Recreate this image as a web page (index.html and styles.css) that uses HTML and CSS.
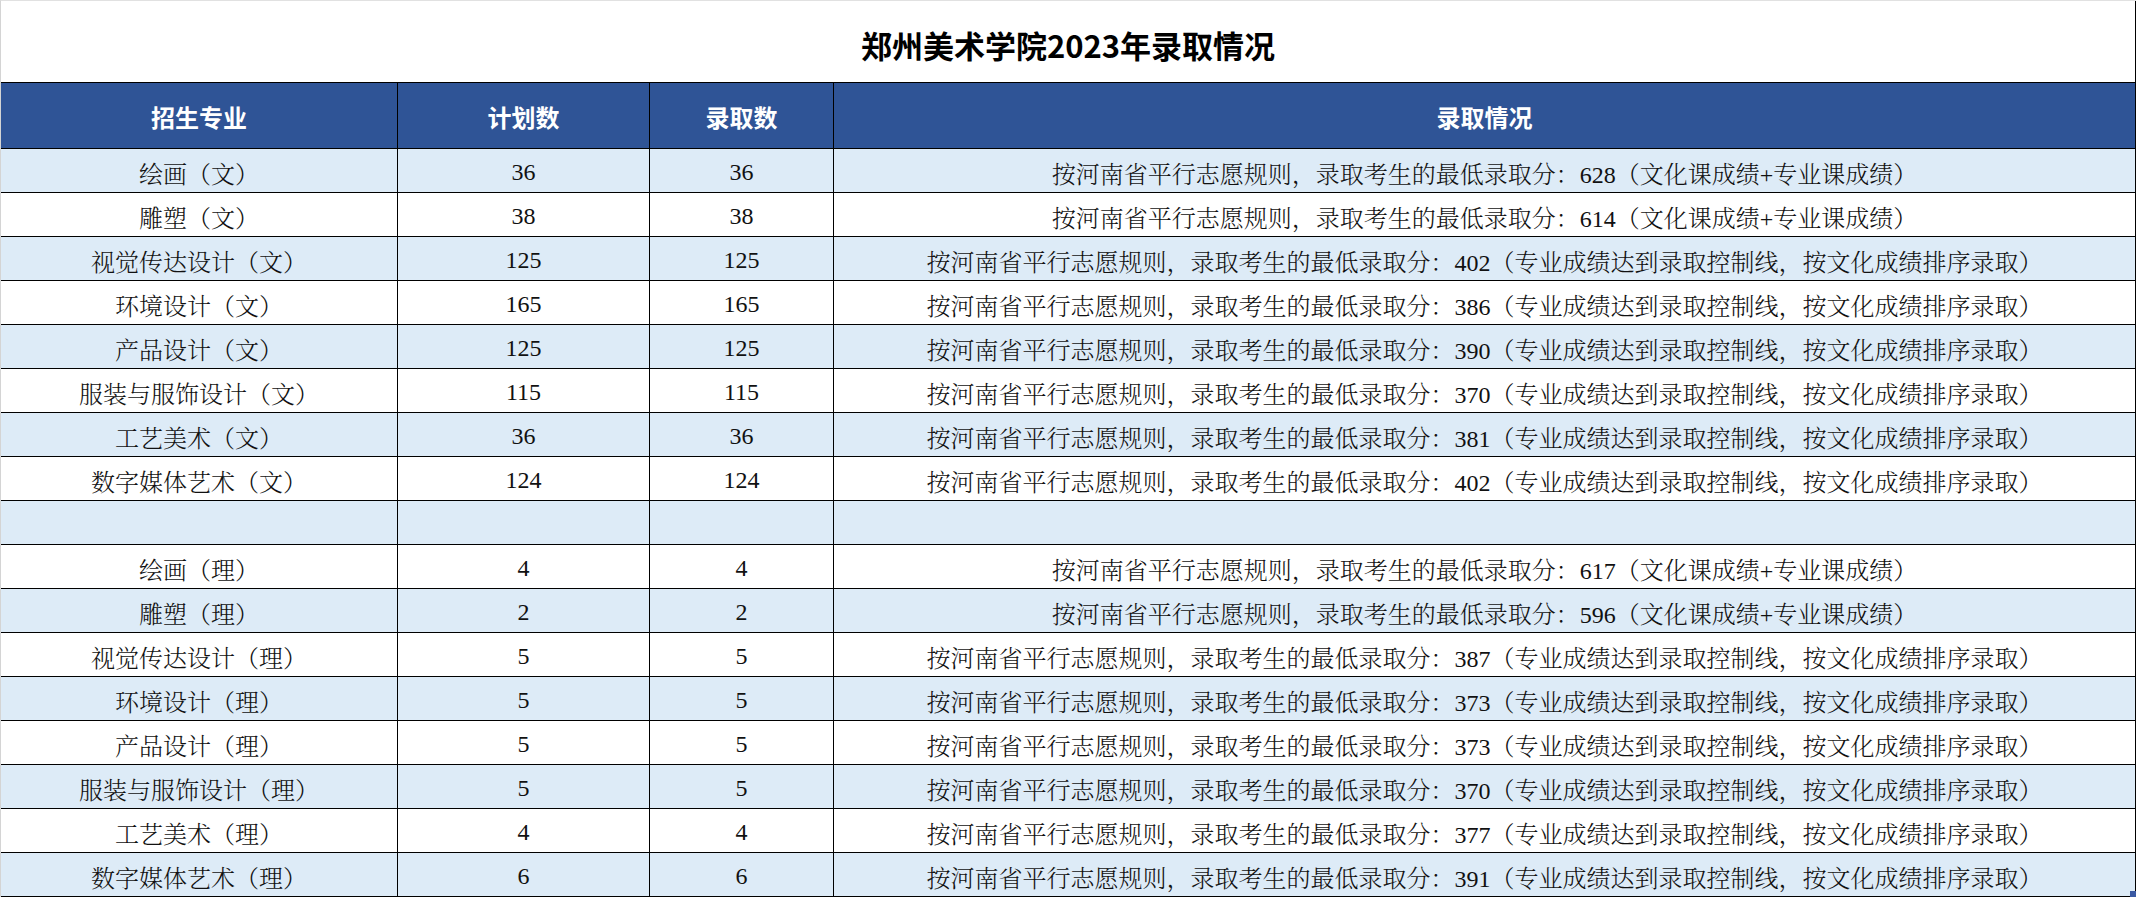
FILE: index.html
```html
<!DOCTYPE html>
<html lang="zh-CN">
<head>
<meta charset="utf-8">
<title>郑州美术学院2023年录取情况</title>
<link rel="stylesheet" href="styles.css">
</head>
<body>
<div class="sheet">
  <div class="title">郑州美术学院2023年录取情况</div>
  <div class="hd">招生专业</div><div class="hd">计划数</div><div class="hd">录取数</div><div class="hd">录取情况</div>

  <div class="c alt">绘画（文）</div><div class="c alt">36</div><div class="c alt">36</div><div class="c alt">按河南省平行志愿规则，录取考生的最低录取分：628（文化课成绩+专业课成绩）</div>
  <div class="c">雕塑（文）</div><div class="c">38</div><div class="c">38</div><div class="c">按河南省平行志愿规则，录取考生的最低录取分：614（文化课成绩+专业课成绩）</div>
  <div class="c alt">视觉传达设计（文）</div><div class="c alt">125</div><div class="c alt">125</div><div class="c alt">按河南省平行志愿规则，录取考生的最低录取分：402（专业成绩达到录取控制线，按文化成绩排序录取）</div>
  <div class="c">环境设计（文）</div><div class="c">165</div><div class="c">165</div><div class="c">按河南省平行志愿规则，录取考生的最低录取分：386（专业成绩达到录取控制线，按文化成绩排序录取）</div>
  <div class="c alt">产品设计（文）</div><div class="c alt">125</div><div class="c alt">125</div><div class="c alt">按河南省平行志愿规则，录取考生的最低录取分：390（专业成绩达到录取控制线，按文化成绩排序录取）</div>
  <div class="c">服装与服饰设计（文）</div><div class="c">115</div><div class="c">115</div><div class="c">按河南省平行志愿规则，录取考生的最低录取分：370（专业成绩达到录取控制线，按文化成绩排序录取）</div>
  <div class="c alt">工艺美术（文）</div><div class="c alt">36</div><div class="c alt">36</div><div class="c alt">按河南省平行志愿规则，录取考生的最低录取分：381（专业成绩达到录取控制线，按文化成绩排序录取）</div>
  <div class="c">数字媒体艺术（文）</div><div class="c">124</div><div class="c">124</div><div class="c">按河南省平行志愿规则，录取考生的最低录取分：402（专业成绩达到录取控制线，按文化成绩排序录取）</div>

  <div class="c alt"></div><div class="c alt"></div><div class="c alt"></div><div class="c alt"></div>

  <div class="c">绘画（理）</div><div class="c">4</div><div class="c">4</div><div class="c">按河南省平行志愿规则，录取考生的最低录取分：617（文化课成绩+专业课成绩）</div>
  <div class="c alt">雕塑（理）</div><div class="c alt">2</div><div class="c alt">2</div><div class="c alt">按河南省平行志愿规则，录取考生的最低录取分：596（文化课成绩+专业课成绩）</div>
  <div class="c">视觉传达设计（理）</div><div class="c">5</div><div class="c">5</div><div class="c">按河南省平行志愿规则，录取考生的最低录取分：387（专业成绩达到录取控制线，按文化成绩排序录取）</div>
  <div class="c alt">环境设计（理）</div><div class="c alt">5</div><div class="c alt">5</div><div class="c alt">按河南省平行志愿规则，录取考生的最低录取分：373（专业成绩达到录取控制线，按文化成绩排序录取）</div>
  <div class="c">产品设计（理）</div><div class="c">5</div><div class="c">5</div><div class="c">按河南省平行志愿规则，录取考生的最低录取分：373（专业成绩达到录取控制线，按文化成绩排序录取）</div>
  <div class="c alt">服装与服饰设计（理）</div><div class="c alt">5</div><div class="c alt">5</div><div class="c alt">按河南省平行志愿规则，录取考生的最低录取分：370（专业成绩达到录取控制线，按文化成绩排序录取）</div>
  <div class="c">工艺美术（理）</div><div class="c">4</div><div class="c">4</div><div class="c">按河南省平行志愿规则，录取考生的最低录取分：377（专业成绩达到录取控制线，按文化成绩排序录取）</div>
  <div class="c alt">数字媒体艺术（理）</div><div class="c alt">6</div><div class="c alt">6</div><div class="c alt">按河南省平行志愿规则，录取考生的最低录取分：391（专业成绩达到录取控制线，按文化成绩排序录取）</div>

  <span class="handle"></span>
</div>
</body>
</html>
```

FILE: styles.css
```css
html, body {
  margin: 0;
  padding: 0;
  background: #ffffff;
}

.sheet {
  position: relative;
  box-sizing: border-box;
  width: 2136px;
  height: 897px;
  display: grid;
  grid-template-columns: 396px 251px 183px 1301px;
  grid-template-rows: 81px 65px repeat(17, 43px);
  column-gap: 1px;
  row-gap: 1px;
  background: #000000;
  border-top: 1px solid #e1e1e1;
  border-left: 1px solid #d4d4d4;
  padding-right: 1px;
  padding-bottom: 1px;
  overflow: hidden;
}

.title {
  grid-column: 1 / -1;
  background: #ffffff;
  display: flex;
  align-items: center;
  justify-content: center;
  padding-top: 5px;
  box-sizing: border-box;
  font-family: "Noto Sans CJK SC", "Liberation Sans", sans-serif;
  font-weight: 700;
  font-size: 31px;
  color: #000000;
}

.hd {
  background: #2f5496;
  color: #ffffff;
  display: flex;
  align-items: center;
  justify-content: center;
  font-family: "Noto Sans CJK SC", "Liberation Sans", sans-serif;
  font-weight: 700;
  font-size: 24px;
  padding-top: 1px;
  box-sizing: border-box;
}

.c {
  background: #ffffff;
  display: flex;
  align-items: center;
  justify-content: center;
  box-sizing: border-box;
  padding-top: 3px;
  font-family: "Liberation Serif", "Noto Serif CJK SC", "Noto Sans CJK SC", serif;
  font-weight: 300;
  font-size: 24px;
  color: #111111;
  white-space: nowrap;
}

.alt {
  background: #ddebf7;
}

.handle {
  position: absolute;
  right: 0;
  bottom: 0;
  width: 6px;
  height: 6px;
  background: #3b5aa3;
}
```
